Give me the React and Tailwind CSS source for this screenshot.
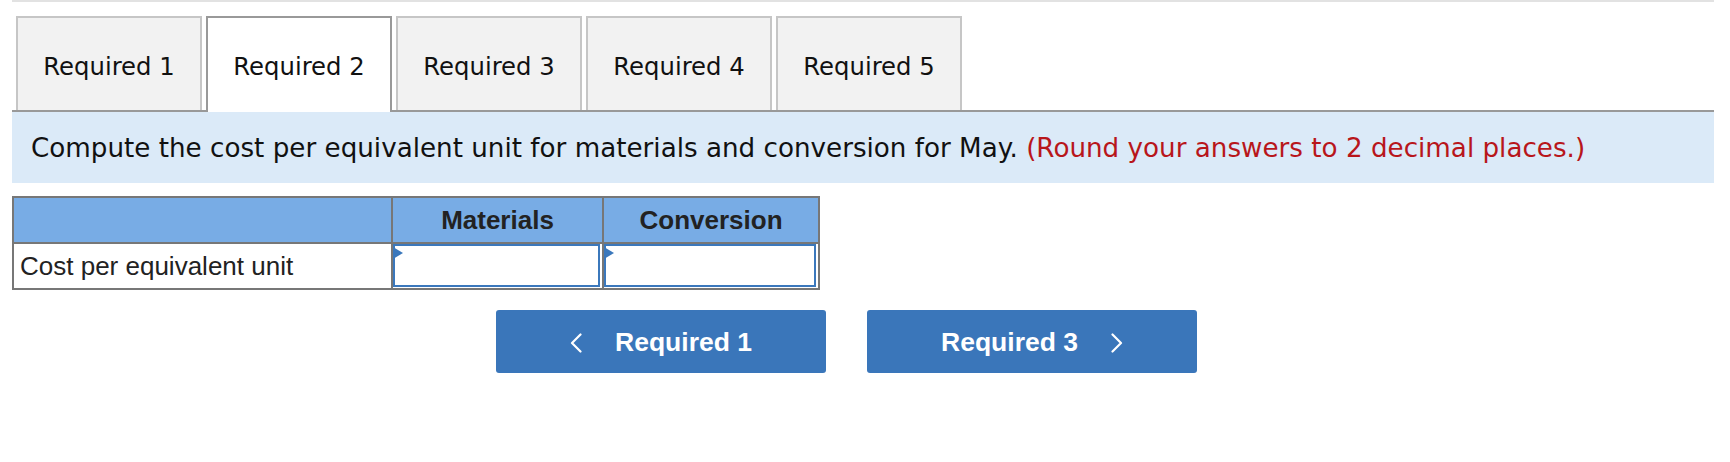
import React from "react";

const verdana = { fontFamily: '"DejaVu Sans", Verdana, sans-serif' };
const arial = { fontFamily: '"Liberation Sans", Arial, sans-serif' };

function Tab({ label, active }) {
  if (active) {
    return (
      <div
        className="relative z-10 -mb-[2px] flex h-[96px] w-[186px] items-center justify-center border-x-2 border-t-2 border-[#999999] bg-white pt-[4px] text-[24.3px] text-[#111111]"
        style={verdana}
      >
        {label}
      </div>
    );
  }
  return (
    <div
      className="flex h-[94px] w-[186px] items-center justify-center border-x-2 border-t-2 border-[#c6c6c6] bg-[#f2f2f2] pt-[6px] text-[24.3px] text-[#111111]"
      style={verdana}
    >
      {label}
    </div>
  );
}

function InputCell() {
  return (
    <div className="relative bg-white pb-[1px] pr-[2px]">
      <div className="h-full w-full border-2 border-[#3b78bc] bg-white" />
      <svg
        className="absolute left-0 top-[3px]"
        width="10"
        height="12"
        viewBox="0 0 10 12"
      >
        <polygon points="0,0 10,6 0,12" fill="#3b78bc" />
      </svg>
    </div>
  );
}

function Chevron({ dir }) {
  return (
    <svg width="12" height="20" viewBox="0 0 12 20" fill="none">
      {dir === "left" ? (
        <polyline
          points="10.5,1.5 2,10 10.5,18.5"
          stroke="white"
          strokeWidth="2.2"
          strokeLinecap="round"
          strokeLinejoin="round"
        />
      ) : (
        <polyline
          points="1.5,1.5 10,10 1.5,18.5"
          stroke="white"
          strokeWidth="2.2"
          strokeLinecap="round"
          strokeLinejoin="round"
        />
      )}
    </svg>
  );
}

export default function App() {
  return (
    <div className="h-[462px] w-[1730px] bg-white">
      <div className="ml-[12px] w-[1702px]">
        <div className="h-[2px] w-full bg-[#e2e2e2]" />

        <div className="mt-[14px] flex items-start gap-[4px] border-b-2 border-[#999999] pl-[4px]">
          <Tab label="Required 1" />
          <Tab label="Required 2" active />
          <Tab label="Required 3" />
          <Tab label="Required 4" />
          <Tab label="Required 5" />
        </div>

        <div
          className="flex h-[71px] items-center bg-[#dbeaf8] pl-[19px] pt-[3px] text-[26.2px] text-[#111111]"
          style={verdana}
        >
          <span>
            Compute the cost per equivalent unit for materials and conversion for May.{" "}
            <span className="text-[#b8161b]">(Round your answers to 2 decimal places.)</span>
          </span>
        </div>

        <div
          className="mt-[13px] grid w-[808px] grid-cols-[377px_209px_214px] grid-rows-[44px_44px] gap-[2px] bg-[#777777] p-[2px] text-[26px] text-[#222222]"
          style={arial}
        >
          <div className="bg-[#78ace5]" />
          <div className="flex items-center justify-center bg-[#78ace5] font-bold">Materials</div>
          <div className="flex items-center justify-center bg-[#78ace5] font-bold">Conversion</div>
          <div className="flex items-center bg-white pl-[6px] pt-[1px]">Cost per equivalent unit</div>
          <InputCell />
          <InputCell />
        </div>

        <div className="mt-[20px] flex gap-[41px] pl-[484px]" style={arial}>
          <button className="flex h-[63px] w-[330px] items-center justify-center gap-[33px] rounded-[3px] bg-[#3a76ba] pt-[2px] text-[26.5px] font-bold text-white">
            <Chevron dir="left" />
            <span>Required 1</span>
          </button>
          <button className="flex h-[63px] w-[330px] items-center justify-center gap-[33px] rounded-[3px] bg-[#3a76ba] pt-[2px] text-[26.5px] font-bold text-white">
            <span>Required 3</span>
            <Chevron dir="right" />
          </button>
        </div>
      </div>
    </div>
  );
}
